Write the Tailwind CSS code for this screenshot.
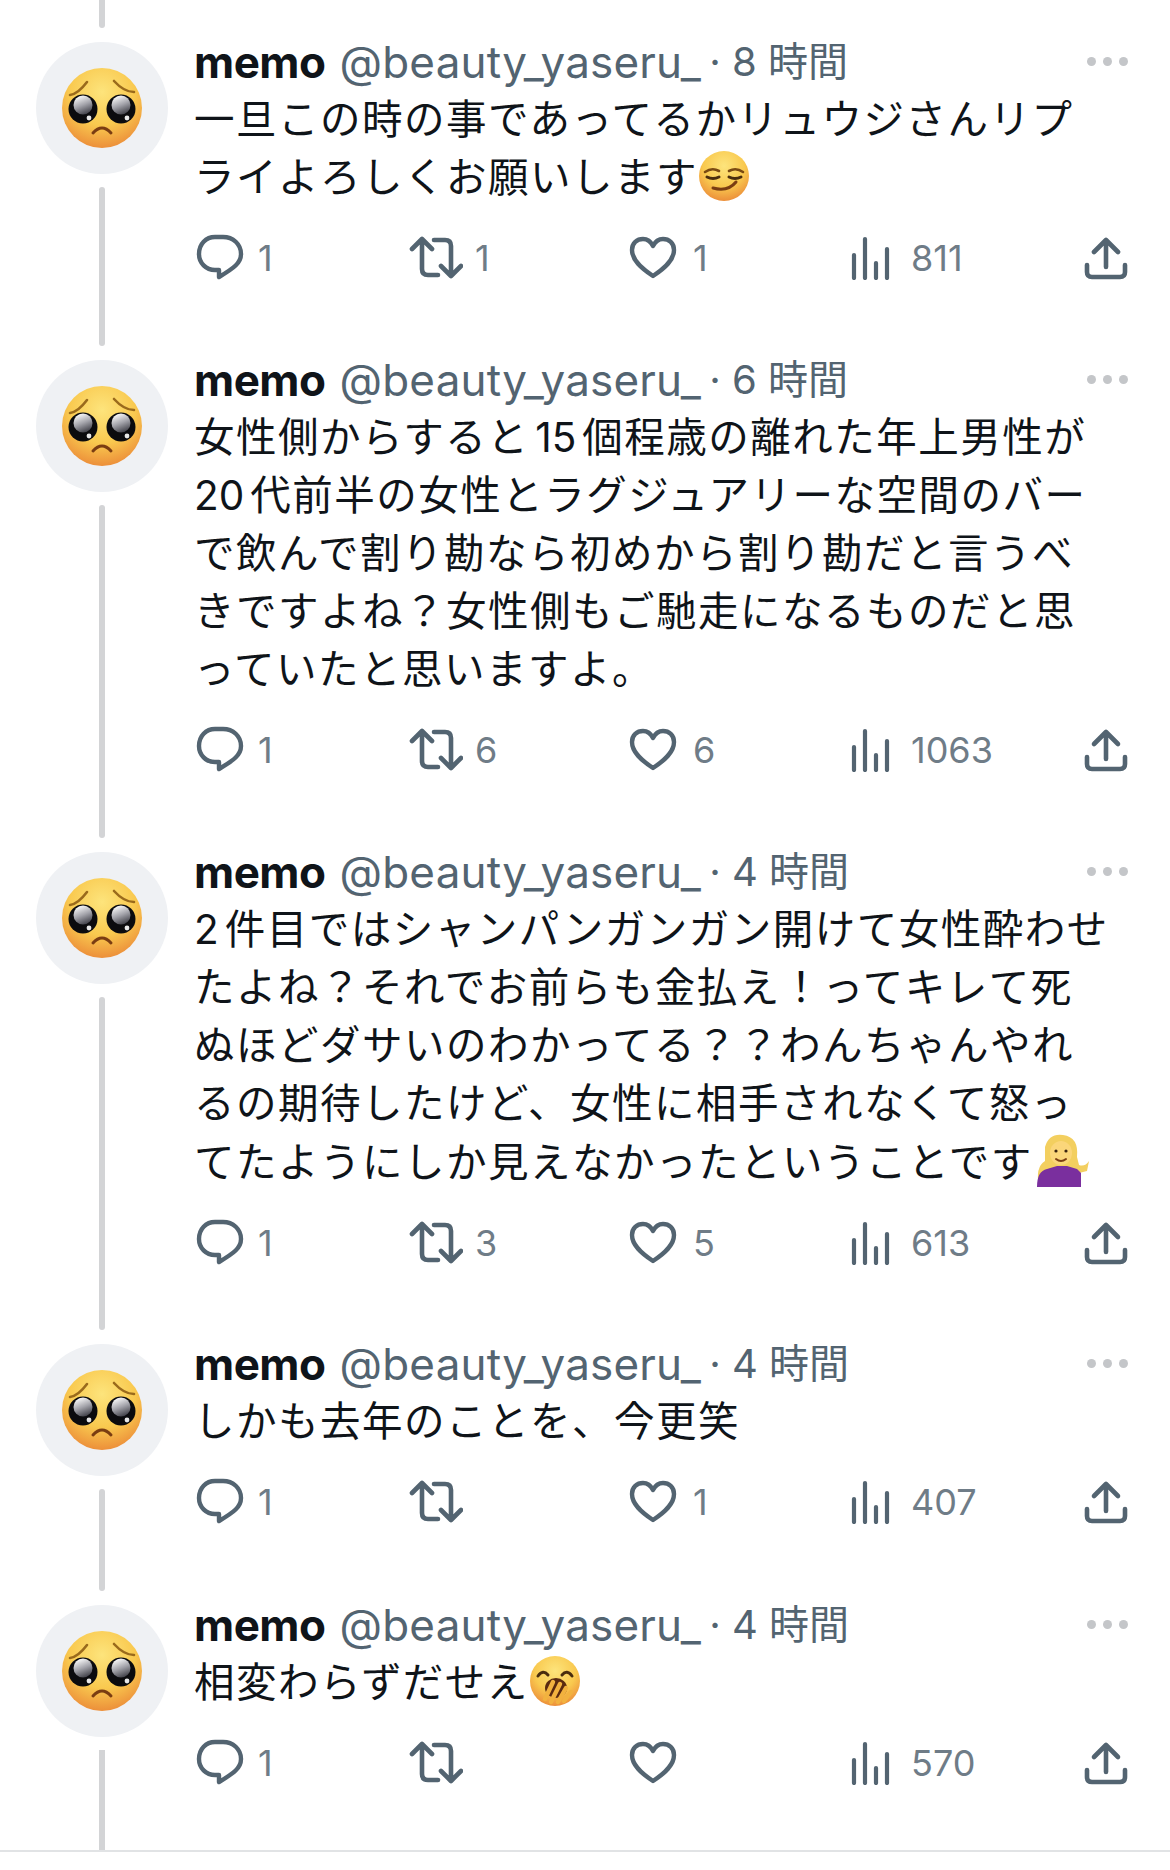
<!DOCTYPE html>
<html lang="ja">
  <head>
    <meta charset="UTF-8" />
    <meta name="viewport" content="width=device-width, initial-scale=1.0" />
    <script src="https://cdn.jsdelivr.net/npm/@tailwindcss/browser@4"></script>
    <title>memo thread</title>
  </head>
  <body class="bg-white font-['Inter','Noto_Sans_CJK_JP',sans-serif]">
    <svg class="absolute w-0 h-0" width="0" height="0">
      <defs>
        <radialGradient id="skin" cx="50%" cy="30%" r="75%">
          <stop offset="0" stop-color="#fde47c" />
          <stop offset="0.55" stop-color="#f9c94f" />
          <stop offset="1" stop-color="#ea8536" />
        </radialGradient>
        <linearGradient id="eye" x1="0.3" y1="0" x2="0.7" y2="1">
          <stop offset="0" stop-color="#ffffff" />
          <stop offset="0.5" stop-color="#a3a3aa" />
          <stop offset="1" stop-color="#3a3a42" />
        </linearGradient>
        <symbol id="pleading" viewBox="0 0 80 80">
          <circle cx="40" cy="40" r="40" fill="url(#skin)" />
          <path d="M8 27 Q16 26 25 14" fill="none" stroke="#9a6a1c" stroke-width="2.6" stroke-linecap="round" />
          <path d="M72 24 Q62 24 52 13" fill="none" stroke="#9a6a1c" stroke-width="2.6" stroke-linecap="round" />
          <circle cx="21" cy="41" r="14.5" fill="#0b0b0e" />
          <circle cx="59" cy="41" r="14.5" fill="#0b0b0e" />
          <circle cx="21" cy="37" r="9.5" fill="url(#eye)" />
          <circle cx="59" cy="37" r="9.5" fill="url(#eye)" />
          <circle cx="27" cy="50" r="2.4" fill="#e8e8e8" />
          <circle cx="65" cy="50" r="2.4" fill="#e8e8e8" />
          <path d="M31 65 Q40 55 49 65" fill="none" stroke="#7a3d12" stroke-width="3" stroke-linecap="round" />
        </symbol>
        <symbol id="comment" viewBox="0 0 48 48">
          <path d="M19 3 H27 C37 3 45 10 45 20 C45 29 38 34 23 43 V36 H19 C10 36 3 29 3 20 C3 10 10 3 19 3 Z" fill="none" stroke="currentColor" stroke-width="4.4" stroke-linejoin="round" />
        </symbol>
        <symbol id="retweet" viewBox="0 0 54 48">
          <path d="M3 15 L13 5 L23 15 M13 6 V35 Q13 41 19 41 H29" fill="none" stroke="currentColor" stroke-width="4.6" stroke-linejoin="round" stroke-linecap="round" />
          <path d="M25 6 H36 Q42 6 42 12 V41 M32 32 L42 42 L52 32" fill="none" stroke="currentColor" stroke-width="4.6" stroke-linejoin="round" stroke-linecap="round" />
        </symbol>
        <symbol id="heart" viewBox="0 0 48 44">
          <path d="M24 40 C12 32 3 24 3 14 C3 7 8 3 14 3 C19 3 22 6 24 10 C26 6 29 3 34 3 C40 3 45 7 45 14 C45 24 36 32 24 40 Z" fill="none" stroke="currentColor" stroke-width="4.4" stroke-linejoin="round" />
        </symbol>
        <symbol id="bars" viewBox="0 0 40 44">
          <path d="M3 19 V42 M14 3 V42 M25 27 V42 M36 13 V42" fill="none" stroke="currentColor" stroke-width="4.2" stroke-linecap="round" />
        </symbol>
        <symbol id="share" viewBox="0 0 44 44">
          <path d="M22 31 V4 M10 16 L22 4 L34 16" fill="none" stroke="currentColor" stroke-width="4.6" stroke-linecap="round" stroke-linejoin="round" />
          <path d="M3 29 V36 Q3 41 8 41 H36 Q41 41 41 36 V29" fill="none" stroke="currentColor" stroke-width="4.6" stroke-linecap="round" />
        </symbol>
      </defs>
    </svg>

    <div class="w-[1170px] h-[1870px] overflow-hidden">
      <div class="ml-[99px] w-[6px] h-[28px] mb-[5px] rounded-b-full bg-[#d3d4d6]"></div>

      <!-- tweet 1 -->
      <div class="flex h-[318px]">
        <div class="w-[194px] shrink-0 flex flex-col items-center pl-[36px] pr-[26px] pt-[9px] pb-[5px]">
          <div class="w-[132px] h-[132px] shrink-0 rounded-full bg-[#eff1f4] flex items-center justify-center">
            <svg class="w-[80px] h-[80px]"><use href="#pleading" /></svg>
          </div>
          <div class="w-[6px] flex-1 mt-[13px] rounded-full bg-[#d3d4d6]"></div>
        </div>
        <div class="flex-1">
          <div class="flex items-center h-[58px] pr-[42px] text-[40px] leading-[58px] text-[#536471]">
            <span class="font-bold text-[44px] text-[#0f1419] tracking-[-0.5px]">memo</span>
            <span class="ml-[14px] text-[44px] tracking-[0.2px]">@beauty_yaseru_</span>
            <span class="ml-[8px]">· 8 時間</span>
            <span class="ml-auto flex gap-[7px] -mt-[2px]">
              <i class="w-[9px] h-[9px] rounded-full bg-[#c4c6c9]"></i><i class="w-[9px] h-[9px] rounded-full bg-[#c4c6c9]"></i><i class="w-[9px] h-[9px] rounded-full bg-[#c4c6c9]"></i>
            </span>
          </div>
          <p class="text-[40.5px] leading-[58px] tracking-[1.5px] text-[#0f1419] whitespace-nowrap">一旦この時の事であってるかリュウジさんリプ<br />ライよろしくお願いします<svg class="inline-block w-[52px] h-[52px] align-[-10px]" viewBox="0 0 52 52"><circle cx="26" cy="26" r="25" fill="url(#skin)" /><path d="M7 22 Q14 17 21 21 M31 21 Q38 17 45 22" fill="none" stroke="#7a4a12" stroke-width="2.6" stroke-linecap="round" /><path d="M9 27 Q15 30 21 27 M31 27 Q37 30 43 27" fill="none" stroke="#4a2d0e" stroke-width="3" stroke-linecap="round" /><path d="M15 38 Q30 42 38 32" fill="none" stroke="#7a3d12" stroke-width="3" stroke-linecap="round" /></svg></p>
          <div class="mt-[22px] flex items-center h-[58px] text-[36px] text-[#536471]">
            <div class="w-[215px] flex items-center gap-[14px] pl-[2px]"><svg class="w-[48px] h-[48px]"><use href="#comment" /></svg><span class="text-[#6f7c87]">1</span></div>
            <div class="w-[220px] flex items-center gap-[12px]"><svg class="w-[54px] h-[48px]"><use href="#retweet" /></svg><span class="text-[#6f7c87]">1</span></div>
            <div class="w-[222px] flex items-center gap-[16px]"><svg class="w-[48px] h-[44px]"><use href="#heart" /></svg><span class="text-[#6f7c87]">1</span></div>
            <div class="w-[233px] flex items-center gap-[20px]"><svg class="w-[40px] h-[44px]"><use href="#bars" /></svg><span class="text-[#6f7c87]">811</span></div>
            <svg class="w-[44px] h-[44px]"><use href="#share" /></svg>
          </div>
        </div>
      </div>

      <!-- tweet 2 -->
      <div class="flex h-[492px]">
        <div class="w-[194px] shrink-0 flex flex-col items-center pl-[36px] pr-[26px] pt-[9px] pb-[5px]">
          <div class="w-[132px] h-[132px] shrink-0 rounded-full bg-[#eff1f4] flex items-center justify-center">
            <svg class="w-[80px] h-[80px]"><use href="#pleading" /></svg>
          </div>
          <div class="w-[6px] flex-1 mt-[13px] rounded-full bg-[#d3d4d6]"></div>
        </div>
        <div class="flex-1">
          <div class="flex items-center h-[58px] pr-[42px] text-[40px] leading-[58px] text-[#536471]">
            <span class="font-bold text-[44px] text-[#0f1419] tracking-[-0.5px]">memo</span>
            <span class="ml-[14px] text-[44px] tracking-[0.2px]">@beauty_yaseru_</span>
            <span class="ml-[8px]">· 6 時間</span>
            <span class="ml-auto flex gap-[7px] -mt-[2px]">
              <i class="w-[9px] h-[9px] rounded-full bg-[#c4c6c9]"></i><i class="w-[9px] h-[9px] rounded-full bg-[#c4c6c9]"></i><i class="w-[9px] h-[9px] rounded-full bg-[#c4c6c9]"></i>
            </span>
          </div>
          <p class="text-[40.5px] leading-[58px] tracking-[1.5px] text-[#0f1419] whitespace-nowrap">女性側からすると<span class="mx-[6px] tracking-normal">15</span>個程歳の離れた年上男性が<br /><span class="mr-[6px] tracking-normal">20</span>代前半の女性とラグジュアリーな空間のバー<br />で飲んで割り勘なら初めから割り勘だと言うべ<br />きですよね？女性側もご馳走になるものだと思<br />っていたと思いますよ。</p>
          <div class="mt-[22px] flex items-center h-[58px] text-[36px] text-[#536471]">
            <div class="w-[215px] flex items-center gap-[14px] pl-[2px]"><svg class="w-[48px] h-[48px]"><use href="#comment" /></svg><span class="text-[#6f7c87]">1</span></div>
            <div class="w-[220px] flex items-center gap-[12px]"><svg class="w-[54px] h-[48px]"><use href="#retweet" /></svg><span class="text-[#6f7c87]">6</span></div>
            <div class="w-[222px] flex items-center gap-[16px]"><svg class="w-[48px] h-[44px]"><use href="#heart" /></svg><span class="text-[#6f7c87]">6</span></div>
            <div class="w-[233px] flex items-center gap-[20px]"><svg class="w-[40px] h-[44px]"><use href="#bars" /></svg><span class="text-[#6f7c87]">1063</span></div>
            <svg class="w-[44px] h-[44px]"><use href="#share" /></svg>
          </div>
        </div>
      </div>

      <!-- tweet 3 -->
      <div class="flex h-[492px]">
        <div class="w-[194px] shrink-0 flex flex-col items-center pl-[36px] pr-[26px] pt-[9px] pb-[5px]">
          <div class="w-[132px] h-[132px] shrink-0 rounded-full bg-[#eff1f4] flex items-center justify-center">
            <svg class="w-[80px] h-[80px]"><use href="#pleading" /></svg>
          </div>
          <div class="w-[6px] flex-1 mt-[13px] rounded-full bg-[#d3d4d6]"></div>
        </div>
        <div class="flex-1">
          <div class="flex items-center h-[58px] pr-[42px] text-[40px] leading-[58px] text-[#536471]">
            <span class="font-bold text-[44px] text-[#0f1419] tracking-[-0.5px]">memo</span>
            <span class="ml-[14px] text-[44px] tracking-[0.2px]">@beauty_yaseru_</span>
            <span class="ml-[8px]">· 4 時間</span>
            <span class="ml-auto flex gap-[7px] -mt-[2px]">
              <i class="w-[9px] h-[9px] rounded-full bg-[#c4c6c9]"></i><i class="w-[9px] h-[9px] rounded-full bg-[#c4c6c9]"></i><i class="w-[9px] h-[9px] rounded-full bg-[#c4c6c9]"></i>
            </span>
          </div>
          <p class="text-[40.5px] leading-[58px] tracking-[1.5px] text-[#0f1419] whitespace-nowrap"><span class="mr-[6px] tracking-normal">2</span>件目ではシャンパンガンガン開けて女性酔わせ<br />たよね？それでお前らも金払え！ってキレて死<br />ぬほどダサいのわかってる？？わんちゃんやれ<br />るの期待したけど、女性に相手されなくて怒っ<br />てたようにしか見えなかったということです<svg class="inline-block w-[58px] h-[54px] align-[-10px]" viewBox="0 0 58 54"><path d="M6 54 Q2 34 12 28 L12 14 Q16 0 30 2 Q46 4 44 24 L46 32 Q52 34 56 28 L54 38 L46 40 L44 54 Z" fill="#f3cf5f" /><path d="M4 54 Q4 38 14 36 L24 33 H34 L44 36 L48 40 V54 Z" fill="#7a2f9e" /><ellipse cx="28" cy="20" rx="11" ry="12" fill="#fbd67a" /><path d="M23 26 Q28 30 33 26" fill="none" stroke="#7a3d12" stroke-width="2" stroke-linecap="round" /><circle cx="23" cy="18" r="1.6" fill="#3a2410" /><circle cx="33" cy="18" r="1.6" fill="#3a2410" /></svg></p>
          <div class="mt-[22px] flex items-center h-[58px] text-[36px] text-[#536471]">
            <div class="w-[215px] flex items-center gap-[14px] pl-[2px]"><svg class="w-[48px] h-[48px]"><use href="#comment" /></svg><span class="text-[#6f7c87]">1</span></div>
            <div class="w-[220px] flex items-center gap-[12px]"><svg class="w-[54px] h-[48px]"><use href="#retweet" /></svg><span class="text-[#6f7c87]">3</span></div>
            <div class="w-[222px] flex items-center gap-[16px]"><svg class="w-[48px] h-[44px]"><use href="#heart" /></svg><span class="text-[#6f7c87]">5</span></div>
            <div class="w-[233px] flex items-center gap-[20px]"><svg class="w-[40px] h-[44px]"><use href="#bars" /></svg><span class="text-[#6f7c87]">613</span></div>
            <svg class="w-[44px] h-[44px]"><use href="#share" /></svg>
          </div>
        </div>
      </div>

      <!-- tweet 4 -->
      <div class="flex h-[261px]">
        <div class="w-[194px] shrink-0 flex flex-col items-center pl-[36px] pr-[26px] pt-[9px] pb-[5px]">
          <div class="w-[132px] h-[132px] shrink-0 rounded-full bg-[#eff1f4] flex items-center justify-center">
            <svg class="w-[80px] h-[80px]"><use href="#pleading" /></svg>
          </div>
          <div class="w-[6px] flex-1 mt-[13px] rounded-full bg-[#d3d4d6]"></div>
        </div>
        <div class="flex-1">
          <div class="flex items-center h-[58px] pr-[42px] text-[40px] leading-[58px] text-[#536471]">
            <span class="font-bold text-[44px] text-[#0f1419] tracking-[-0.5px]">memo</span>
            <span class="ml-[14px] text-[44px] tracking-[0.2px]">@beauty_yaseru_</span>
            <span class="ml-[8px]">· 4 時間</span>
            <span class="ml-auto flex gap-[7px] -mt-[2px]">
              <i class="w-[9px] h-[9px] rounded-full bg-[#c4c6c9]"></i><i class="w-[9px] h-[9px] rounded-full bg-[#c4c6c9]"></i><i class="w-[9px] h-[9px] rounded-full bg-[#c4c6c9]"></i>
            </span>
          </div>
          <p class="text-[40.5px] leading-[58px] tracking-[1.5px] text-[#0f1419] whitespace-nowrap">しかも去年のことを、今更笑</p>
          <div class="mt-[22px] flex items-center h-[58px] text-[36px] text-[#536471]">
            <div class="w-[215px] flex items-center gap-[14px] pl-[2px]"><svg class="w-[48px] h-[48px]"><use href="#comment" /></svg><span class="text-[#6f7c87]">1</span></div>
            <div class="w-[220px] flex items-center gap-[12px]"><svg class="w-[54px] h-[48px]"><use href="#retweet" /></svg></div>
            <div class="w-[222px] flex items-center gap-[16px]"><svg class="w-[48px] h-[44px]"><use href="#heart" /></svg><span class="text-[#6f7c87]">1</span></div>
            <div class="w-[233px] flex items-center gap-[20px]"><svg class="w-[40px] h-[44px]"><use href="#bars" /></svg><span class="text-[#6f7c87]">407</span></div>
            <svg class="w-[44px] h-[44px]"><use href="#share" /></svg>
          </div>
        </div>
      </div>

      <!-- tweet 5 -->
      <div class="flex h-[254px] border-b-2 border-[#e1e3e5] box-content">
        <div class="w-[194px] shrink-0 flex flex-col items-center pl-[36px] pr-[26px] pt-[9px]">
          <div class="w-[132px] h-[132px] shrink-0 rounded-full bg-[#eff1f4] flex items-center justify-center">
            <svg class="w-[80px] h-[80px]"><use href="#pleading" /></svg>
          </div>
          <div class="w-[6px] flex-1 mt-[13px] bg-[#d3d4d6]"></div>
        </div>
        <div class="flex-1">
          <div class="flex items-center h-[58px] pr-[42px] text-[40px] leading-[58px] text-[#536471]">
            <span class="font-bold text-[44px] text-[#0f1419] tracking-[-0.5px]">memo</span>
            <span class="ml-[14px] text-[44px] tracking-[0.2px]">@beauty_yaseru_</span>
            <span class="ml-[8px]">· 4 時間</span>
            <span class="ml-auto flex gap-[7px] -mt-[2px]">
              <i class="w-[9px] h-[9px] rounded-full bg-[#c4c6c9]"></i><i class="w-[9px] h-[9px] rounded-full bg-[#c4c6c9]"></i><i class="w-[9px] h-[9px] rounded-full bg-[#c4c6c9]"></i>
            </span>
          </div>
          <p class="text-[40.5px] leading-[58px] tracking-[1.5px] text-[#0f1419] whitespace-nowrap">相変わらずだせえ<svg class="inline-block w-[52px] h-[52px] align-[-10px]" viewBox="0 0 52 52"><circle cx="26" cy="26" r="25" fill="url(#skin)" /><path d="M9 21 Q14 14 19 20 M33 20 Q38 14 43 21" fill="none" stroke="#4a2d0e" stroke-width="3" stroke-linecap="round" /><ellipse cx="27" cy="33" rx="11" ry="10" fill="#5a2a10" /><path d="M16 44 L24 27 M22 47 L31 29 M29 47 L37 33 M35 46 L42 37" fill="none" stroke="#f2b23f" stroke-width="4.4" stroke-linecap="round" /></svg></p>
          <div class="mt-[22px] flex items-center h-[58px] text-[36px] text-[#536471]">
            <div class="w-[215px] flex items-center gap-[14px] pl-[2px]"><svg class="w-[48px] h-[48px]"><use href="#comment" /></svg><span class="text-[#6f7c87]">1</span></div>
            <div class="w-[220px] flex items-center gap-[12px]"><svg class="w-[54px] h-[48px]"><use href="#retweet" /></svg></div>
            <div class="w-[222px] flex items-center gap-[16px]"><svg class="w-[48px] h-[44px]"><use href="#heart" /></svg></div>
            <div class="w-[233px] flex items-center gap-[20px]"><svg class="w-[40px] h-[44px]"><use href="#bars" /></svg><span class="text-[#6f7c87]">570</span></div>
            <svg class="w-[44px] h-[44px]"><use href="#share" /></svg>
          </div>
        </div>
      </div>
    </div>
  </body>
</html>
